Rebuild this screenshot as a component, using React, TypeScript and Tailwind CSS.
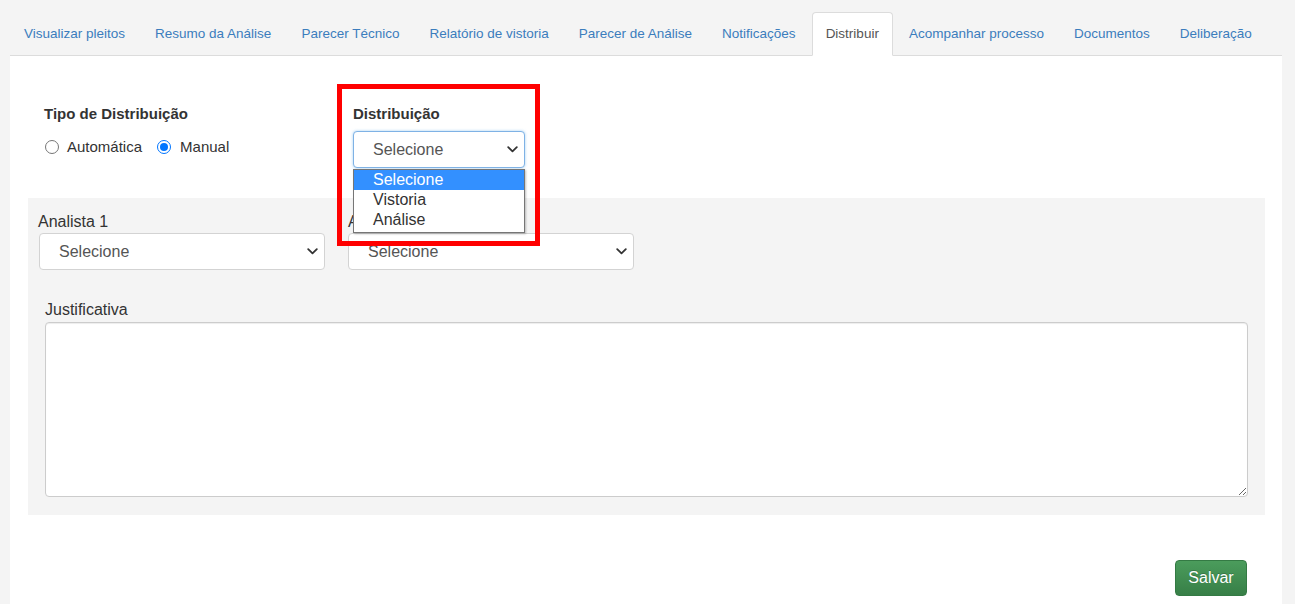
import React from "react";

const tabs = [
  "Visualizar pleitos",
  "Resumo da Análise",
  "Parecer Técnico",
  "Relatório de vistoria",
  "Parecer de Análise",
  "Notificações",
  "Distribuir",
  "Acompanhar processo",
  "Documentos",
  "Deliberação",
];

function Chevron() {
  return (
    <svg width="11" height="7" viewBox="0 0 11 7" className="shrink-0">
      <path d="M1.2 1.2 L5.5 5.4 L9.8 1.2" fill="none" stroke="#333" strokeWidth="1.8" strokeLinecap="round" strokeLinejoin="round" />
    </svg>
  );
}

function FakeSelect({ w, focused }: { w: string; focused?: boolean }) {
  return (
    <div
      className={
        "flex h-[37px] items-center justify-between rounded-[4px] border bg-white pl-[19px] pr-[6px] text-[16px] text-[#555] " +
        w +
        (focused ? " border-[#7fb2e5] shadow-[0_0_3px_rgba(102,175,233,0.6)]" : " border-[#d3d3d3]")
      }
    >
      <span>Selecione</span>
      <Chevron />
    </div>
  );
}

function Radio({ checked }: { checked?: boolean }) {
  return checked ? (
    <span className="flex h-[14px] w-[14px] shrink-0 items-center justify-center rounded-full border-[1.5px] border-[#0075ff] bg-white">
      <span className="block h-[8px] w-[8px] rounded-full bg-[#0075ff]" />
    </span>
  ) : (
    <span className="block h-[14px] w-[14px] shrink-0 rounded-full border border-[#767676] bg-white" />
  );
}

export default function App() {
  return (
    <div
      className="relative flex min-h-[604px] flex-col bg-[#f4f4f4] pl-[10px] pr-[13px] text-[#333]"
      style={{ fontFamily: '"Liberation Sans", Arial, sans-serif' }}
    >
      {/* Tabs */}
      <div className="flex border-b border-[#dcdcdc] pt-[12px]">
        {tabs.map((t) => {
          const active = t === "Distribuir";
          return (
            <div
              key={t}
              className={
                "mr-[2px] -mb-px flex h-[44px] shrink-0 items-center whitespace-nowrap rounded-t-[4px] border px-[13px] text-[13.5px] " +
                (active
                  ? "border-[#dcdcdc] border-b-white bg-white text-[#555]"
                  : "border-transparent text-[#3b7dbd]")
              }
            >
              {t}
            </div>
          );
        })}
      </div>

      {/* Panel */}
      <div className="flex flex-1 flex-col bg-white">
        {/* Top form */}
        <div className="flex pl-[34px] pt-[48px]">
          <div className="w-[309px]">
            <div className="h-[20px] text-[15px] font-bold leading-[20px] text-[#333]">Tipo de Distribuição</div>
            <div className="mt-[13px] flex h-[20px] items-center text-[15px] text-[#333]">
              <span className="ml-[1px] block"><Radio /></span>
              <span className="ml-[8px]">Automática</span>
              <span className="ml-[15px] block"><Radio checked /></span>
              <span className="ml-[9px]">Manual</span>
            </div>
          </div>
          <div>
            <div className="h-[20px] text-[15px] font-bold leading-[20px] text-[#333]">Distribuição</div>
            <div className="mt-[7px]">
              <FakeSelect w="w-[172px]" focused />
            </div>
          </div>
        </div>

        {/* Gray section */}
        <div className="ml-[18px] mr-[17px] mt-[30px] bg-[#f4f4f4] pb-[18px] pt-[14px]">
          <div className="flex pl-[10px]">
            <div className="w-[287px]">
              <div className="h-[19px] text-[16px] leading-[19px] text-[#333]">Analista 1</div>
              <div className="ml-[1px] mt-[2px]">
                <FakeSelect w="w-[286px]" />
              </div>
            </div>
            <div className="ml-[23px]">
              <div className="h-[19px] text-[16px] leading-[19px] text-[#333]">Analista 2</div>
              <div className="mt-[2px]">
                <FakeSelect w="w-[286px]" />
              </div>
            </div>
          </div>
          <div className="mt-[30px] px-[17px]">
            <div className="h-[19px] text-[16px] leading-[19px] text-[#333]">Justificativa</div>
            <textarea
              className="mt-[3px] block h-[175px] w-full rounded-[4px] border border-[#ccc] bg-white shadow-[inset_0_1px_1px_rgba(0,0,0,0.075)] outline-none"
              defaultValue=""
            />
          </div>
        </div>

        {/* Save */}
        <div className="flex justify-end pr-[35px] pt-[45px]">
          <button
            className="h-[36px] w-[72px] rounded-[4px] border border-[#347a44] bg-gradient-to-b from-[#4b9c5c] to-[#377f47] text-[16px] text-white [text-shadow:0_-1px_0_rgba(0,0,0,0.2)]"
          >
            Salvar
          </button>
        </div>
      </div>

      {/* Open dropdown list */}
      <div className="absolute left-[353px] top-[169px] w-[172px] border border-[#767676] bg-white pb-[2px] text-[16px] leading-[20px] text-[#333] shadow-[1px_1px_2px_rgba(0,0,0,0.25)]">
        <div className="h-[20px] bg-[#3390ff] pl-[19px] text-white">Selecione</div>
        <div className="h-[20px] pl-[19px]">Vistoria</div>
        <div className="h-[20px] pl-[19px]">Análise</div>
      </div>

      {/* Red annotation box */}
      <div className="pointer-events-none absolute left-[337px] top-[84px] h-[162px] w-[203px] border-[5px] border-[#ff0000]" />
    </div>
  );
}
